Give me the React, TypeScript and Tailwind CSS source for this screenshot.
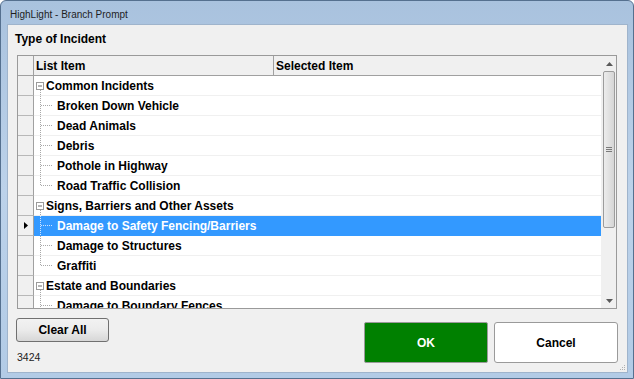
import React from "react";

type Row = { t: string; group?: boolean; last?: boolean; selected?: boolean };

const rows: Row[] = [
  { t: "Common Incidents", group: true },
  { t: "Broken Down Vehicle" },
  { t: "Dead Animals" },
  { t: "Debris" },
  { t: "Pothole in Highway" },
  { t: "Road Traffic Collision", last: true },
  { t: "Signs, Barriers and Other Assets", group: true },
  { t: "Damage to Safety Fencing/Barriers", selected: true },
  { t: "Damage to Structures" },
  { t: "Graffiti", last: true },
  { t: "Estate and Boundaries", group: true },
  { t: "Damage to Boundary Fences" },
];

function GroupGlyph() {
  return (
    <svg width="12" height="19" className="shrink-0">
      <rect x="2.5" y="6.5" width="7" height="7" fill="#fff" stroke="#9a9a9a" />
      <line x1="4" y1="10" x2="8" y2="10" stroke="#6a6a6a" />
      <line x1="6.5" y1="14" x2="6.5" y2="19" stroke="#a8a8a8" strokeDasharray="1 1" />
    </svg>
  );
}

function ChildGlyph({ last, selected }: { last?: boolean; selected?: boolean }) {
  const c = selected ? "#cfe4ff" : "#a8a8a8";
  return (
    <svg width="23" height="19" className="shrink-0">
      <line x1="6.5" y1="0" x2="6.5" y2={last ? 10 : 19} stroke={c} strokeDasharray="1 1" />
      <line x1="7" y1="9.5" x2="19" y2="9.5" stroke={c} strokeDasharray="1 1" />
    </svg>
  );
}

function Scrollbar() {
  return (
    <div className="flex w-[14px] flex-col bg-[#f0f0f0]">
      <div className="flex h-[15px] items-center justify-center">
        <svg width="7" height="4">
          <path d="M0 4 L3.5 0 L7 4 Z" fill="#5a5a5a" />
        </svg>
      </div>
      <div className="mx-[1px] flex h-[157px] items-center justify-center rounded-[2px] border border-[#9c9c9c] bg-gradient-to-r from-[#ececec] to-[#d6d6d6]">
        <svg width="6" height="6">
          <line x1="0" y1="0.5" x2="6" y2="0.5" stroke="#7a7a7a" />
          <line x1="0" y1="2.5" x2="6" y2="2.5" stroke="#7a7a7a" />
          <line x1="0" y1="4.5" x2="6" y2="4.5" stroke="#7a7a7a" />
        </svg>
      </div>
      <div className="flex-1" />
      <div className="flex h-[15px] items-center justify-center">
        <svg width="7" height="4">
          <path d="M0 0 L3.5 4 L7 0 Z" fill="#5a5a5a" />
        </svg>
      </div>
    </div>
  );
}

function Grid() {
  return (
    <div className="ml-[9px] mt-[9px] flex h-[254px] w-[600px] border border-[#9a9a9a] bg-white">
      <div className="flex w-[584px] flex-col overflow-hidden">
        <div className="flex h-[20px] shrink-0 border-b border-[#a0a0a0] bg-[#f0f0f0] font-bold">
          <div className="w-[16px] border-r border-[#a0a0a0]" />
          <div className="flex w-[240px] items-center border-r border-[#a0a0a0] pl-[2px]">List Item</div>
          <div className="flex flex-1 items-center pl-[2px]">Selected Item</div>
        </div>
        {rows.map((r) => (
          <div key={r.t} className="flex h-[20px] shrink-0">
            <div className="flex w-[16px] items-center justify-center border-r border-b border-r-[#a0a0a0] border-b-[#b8b8b8] bg-[#f0f0f0]">
              {r.selected && (
                <svg width="4" height="7">
                  <path d="M0 0 L4 3.5 L0 7 Z" fill="#000" />
                </svg>
              )}
            </div>
            <div
              className={
                r.selected
                  ? "flex flex-1 items-center border-b border-[#3399ff] bg-[#3399ff] font-bold text-white"
                  : "flex flex-1 items-center border-b border-[#f0f0f0] font-bold text-black"
              }
            >
              {r.group ? <GroupGlyph /> : <ChildGlyph last={r.last} selected={r.selected} />}
              <span className="whitespace-nowrap">{r.t}</span>
            </div>
          </div>
        ))}
      </div>
      <div className="border-l border-[#f0f0f0]" />
      <Scrollbar />
    </div>
  );
}

export default function App() {
  return (
    <div className="h-[379px] w-[634px] bg-white font-['Liberation_Sans',Arial,sans-serif] text-[12px] leading-[14px] text-black">
      <div className="flex h-[379px] w-[634px] flex-col rounded-t-[6px] border border-[#55708f] bg-gradient-to-b from-[#a9c2de] via-[#bcd2ea] to-[#b2cbe6]">
        <div className="flex h-[23px] shrink-0 items-center pl-[9px] pt-[4px] text-[10px] text-[#1e1e1e]">
          HighLight - Branch Prompt
        </div>
        <div className="flex flex-1 pl-[6px] pr-[5px] pb-[5px]">
          <div className="flex flex-1 flex-col border border-[#9fb4cc] bg-[#f0f0f0]">
            <div className="pl-[7px] pt-[7px] font-bold">Type of Incident</div>
            <Grid />
            <div className="flex items-start justify-between">
              <div className="ml-[8px] mt-[9px] flex flex-col">
                <button className="h-[24px] w-[93px] rounded-[3px] border border-[#707070] bg-gradient-to-b from-[#f2f2f2] via-[#ebebeb] to-[#d7d7d7] font-bold">
                  Clear All
                </button>
                <div className="ml-[1px] mt-[9px] text-[10.5px] leading-[12px] text-[#222]">3424</div>
              </div>
              <div className="mr-[9px] mt-[13px] flex gap-[6px]">
                <button className="h-[41px] w-[124px] rounded-[2px] border border-[#9a9a9a] bg-[#008000] font-bold text-white">
                  OK
                </button>
                <button className="h-[41px] w-[124px] rounded-[3px] border border-[#9a9a9a] bg-white font-bold text-black">
                  Cancel
                </button>
              </div>
            </div>
            <div className="flex flex-1 items-end justify-end pr-[1px] pb-[1px]">
              <svg width="8" height="8">
                <rect x="6" y="2" width="1" height="1" fill="#b0b0b0" />
                <rect x="4" y="4" width="1" height="1" fill="#b0b0b0" />
                <rect x="6" y="4" width="1" height="1" fill="#b0b0b0" />
                <rect x="2" y="6" width="1" height="1" fill="#b0b0b0" />
                <rect x="4" y="6" width="1" height="1" fill="#b0b0b0" />
                <rect x="6" y="6" width="1" height="1" fill="#b0b0b0" />
              </svg>
            </div>
          </div>
        </div>
      </div>
    </div>
  );
}
